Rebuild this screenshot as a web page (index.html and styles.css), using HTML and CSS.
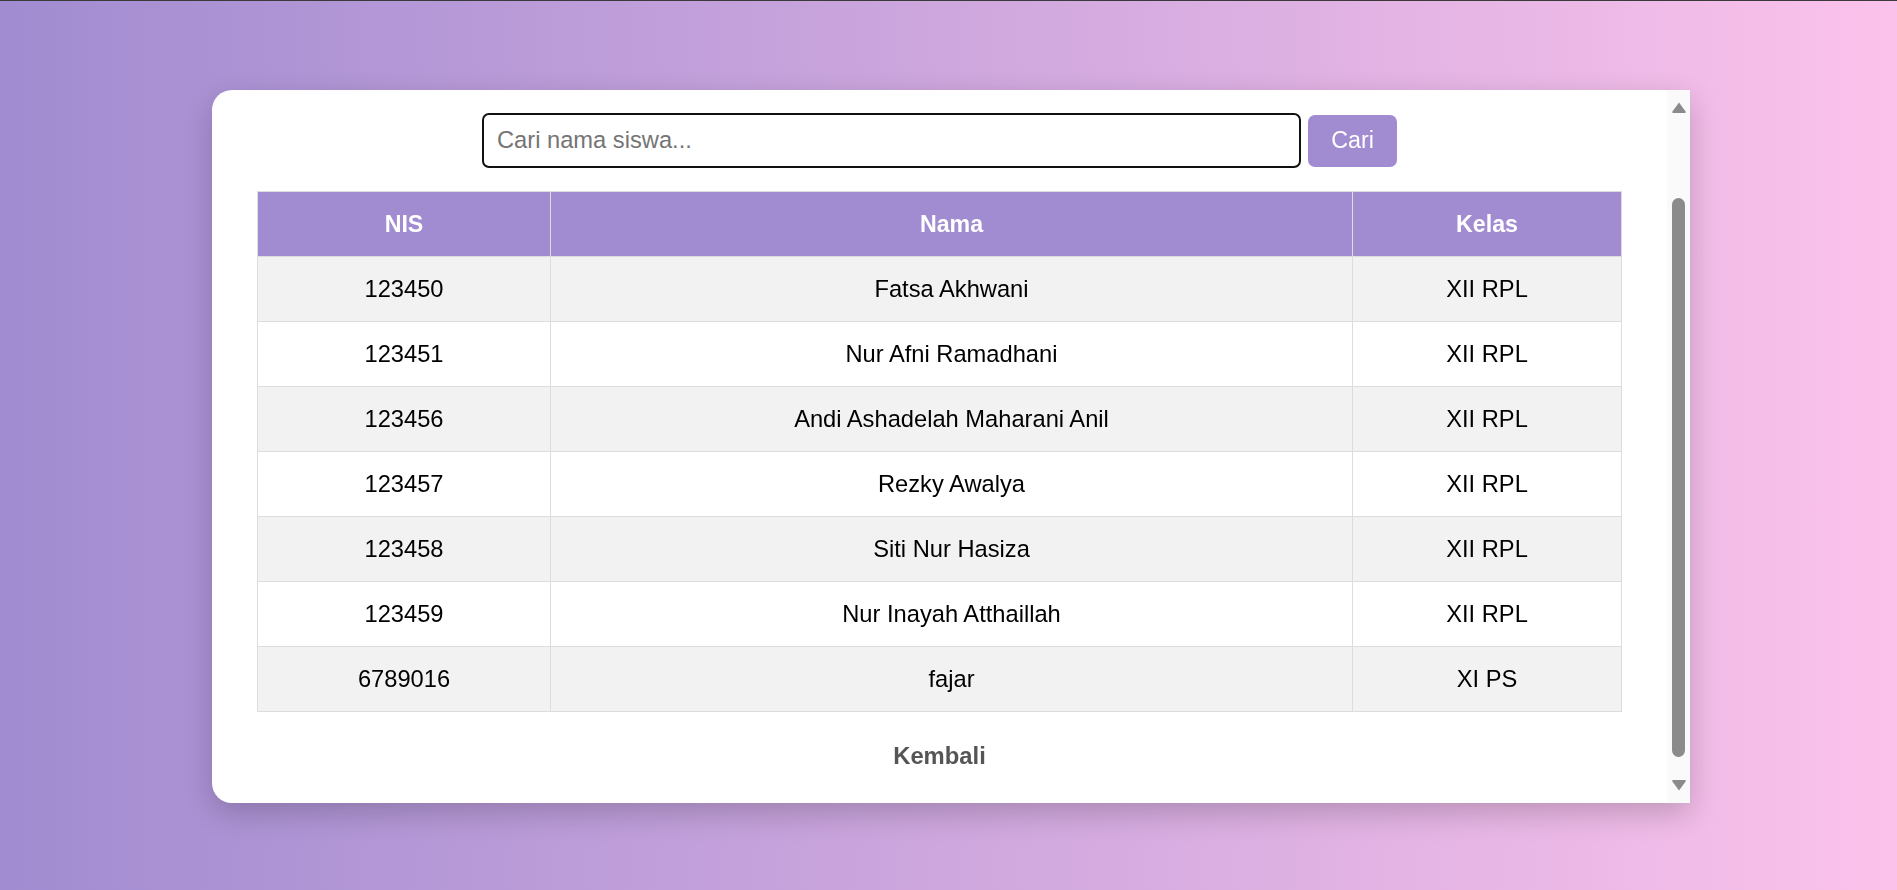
FILE: index.html
```html
<!DOCTYPE html>
<html lang="id">
<head>
<meta charset="utf-8">
<title>Data Siswa</title>
<link rel="stylesheet" href="styles.css">
</head>
<body>
  <div class="card">
    <div class="card-body">
      <form class="search" onsubmit="return false;">
        <input class="search-input" type="text" placeholder="Cari nama siswa..." autofocus>
        <button class="search-btn" type="submit">Cari</button>
      </form>
      <table class="data">
        <colgroup>
          <col class="col-nis">
          <col class="col-nama">
          <col class="col-kelas">
        </colgroup>
        <thead>
          <tr><th>NIS</th><th>Nama</th><th>Kelas</th></tr>
        </thead>
        <tbody>
          <tr><td>123450</td><td>Fatsa Akhwani</td><td>XII RPL</td></tr>
          <tr><td>123451</td><td>Nur Afni Ramadhani</td><td>XII RPL</td></tr>
          <tr><td>123456</td><td>Andi Ashadelah Maharani Anil</td><td>XII RPL</td></tr>
          <tr><td>123457</td><td>Rezky Awalya</td><td>XII RPL</td></tr>
          <tr><td>123458</td><td>Siti Nur Hasiza</td><td>XII RPL</td></tr>
          <tr><td>123459</td><td>Nur Inayah Atthaillah</td><td>XII RPL</td></tr>
          <tr><td>6789016</td><td>fajar</td><td>XI PS</td></tr>
        </tbody>
      </table>
      <p class="back"><a class="back-link" href="#">Kembali</a></p>
    </div>
    <div class="scrollbar" aria-hidden="true">
      <svg class="sb-arrow" width="14" height="11" viewBox="0 0 14 11"><path d="M7 0.5 L13.6 9.6 Q14.2 11 12.8 11 L1.2 11 Q-0.2 11 0.4 9.6 Z" fill="#8b8b8b"/></svg>
      <div class="sb-thumb"></div>
      <svg class="sb-arrow sb-arrow-down" width="14" height="11" viewBox="0 0 14 11"><path d="M7 10.5 L13.6 1.4 Q14.2 0 12.8 0 L1.2 0 Q-0.2 0 0.4 1.4 Z" fill="#8b8b8b"/></svg>
    </div>
  </div>
</body>
</html>
```
FILE: styles.css
```css
html, body {
  margin: 0;
  height: 100%;
}
body {
  box-sizing: border-box;
  border-top: 1px solid #3a3a3a;
  padding: 89px 0 0 5px;
  background: linear-gradient(to right, #a18cd1, #fbc2eb);
  font-family: "Liberation Sans", Arial, sans-serif;
  overflow: hidden;
}
.card {
  display: flex;
  width: 1478px;
  height: 713px;
  margin: 0 auto;
  background: #fff;
  border-radius: 20px 0 0 20px;
  box-shadow: 0 10px 30px rgba(0, 0, 0, 0.2);
  overflow: hidden;
}
.card-body {
  flex: 1;
  min-width: 0;
  padding: 23px 45px 0 45px;
}
.scrollbar {
  width: 23px;
  flex: none;
  display: flex;
  flex-direction: column;
  align-items: flex-start;
  padding: 12px 0 0 5px;
  box-sizing: border-box;
  background: #fafafa;
}
.sb-arrow {
  display: block;
  flex: none;
}
.sb-thumb {
  width: 13px;
  height: 559px;
  margin-top: 85px;
  border-radius: 7px;
  background: #8b8b8b;
  flex: none;
}
.sb-arrow-down {
  margin-top: 23px;
}
.search {
  display: flex;
  justify-content: center;
  align-items: center;
  gap: 7px;
  margin: 0;
}
.search-input {
  box-sizing: border-box;
  width: 819px;
  height: 55px;
  padding: 0 13px;
  border: 2px solid #111;
  border-radius: 7px;
  font-family: inherit;
  font-size: 23.7px;
  color: #000;
  outline: none;
  caret-color: #000;
}
.search-input::placeholder {
  color: #757575;
}
.search-btn {
  box-sizing: border-box;
  width: 89px;
  height: 52px;
  padding: 0;
  border: none;
  border-radius: 7px;
  background: #a18cd1;
  color: #fff;
  font-family: inherit;
  font-size: 23.3px;
}
.data {
  width: 100%;
  margin-top: 23px;
  border-collapse: collapse;
  table-layout: fixed;
  font-size: 23.7px;
}
.col-nis { width: 293px; }
.col-nama { width: 802px; }
.col-kelas { width: 269px; }
.data th,
.data td {
  height: 64px;
  padding: 0;
  border: 1px solid #ddd;
  text-align: center;
  vertical-align: middle;
  color: #000;
}
.data th {
  background: #a18cd1;
  color: #fff;
  font-weight: bold;
  font-size: 23.2px;
}
.data tbody tr:nth-child(odd) td {
  background: #f2f2f2;
}
.data tbody tr:nth-child(even) td {
  background: #fff;
}
.back {
  margin: 30px 0 0;
  line-height: 28px;
  text-align: center;
}
.back-link {
  font-size: 23.8px;
  font-weight: bold;
  color: #555;
  text-decoration: none;
}
```
